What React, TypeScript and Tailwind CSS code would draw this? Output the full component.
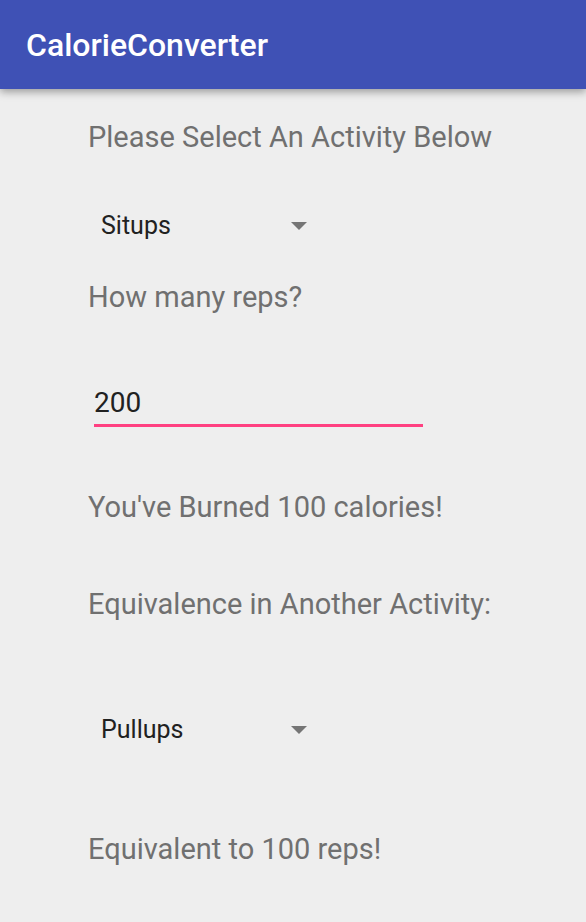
function Spinner({ value }: { value: string }) {
  return (
    <div className="relative flex h-[40px] w-[320px] items-center pl-[101px]">
      <span className="text-[25px] text-[#212121]">{value}</span>
      <svg className="absolute left-[291px] top-[16px]" width="16" height="8" viewBox="0 0 16 8">
        <polygon points="0,0 16,0 8,8" fill="#757575" />
      </svg>
    </div>
  );
}

function Label({ children, className = "" }: { children: React.ReactNode; className?: string }) {
  return (
    <div className={`flex h-[40px] items-center pt-[2px] pl-[88px] text-[29px] text-[#707070] whitespace-nowrap ${className}`}>
      {children}
    </div>
  );
}

export default function App() {
  return (
    <div className="min-h-[922px] w-[586px] overflow-hidden bg-[#eeeeee] font-['Roboto',sans-serif]">
      <div className="relative z-10 flex h-[89px] items-center bg-[#3f51b5] pl-[26px] shadow-[0_3px_8px_rgba(0,0,0,0.35)]">
        <span className="text-[32px] font-medium text-white">CalorieConverter</span>
      </div>

      <Label className="mt-[28px]">Please Select An Activity Below</Label>
      <div className="mt-[49px]">
        <Spinner value="Situps" />
      </div>
      <Label className="mt-[31px]">How many reps?</Label>

      <div className="mt-[65px] ml-[94px] w-[329px]">
        <div className="flex h-[40px] items-center pt-[1px] text-[28px] text-[#212121]">200</div>
        <div className="mt-[2px] h-[3px] bg-[#ff4081]" />
      </div>

      <Label className="mt-[60px]">You've Burned 100 calories!</Label>
      <Label className="mt-[57px]">Equivalence in Another Activity:</Label>
      <div className="mt-[86px]">
        <Spinner value="Pullups" />
      </div>
      <Label className="mt-[79px]">Equivalent to 100 reps!</Label>
    </div>
  );
}
